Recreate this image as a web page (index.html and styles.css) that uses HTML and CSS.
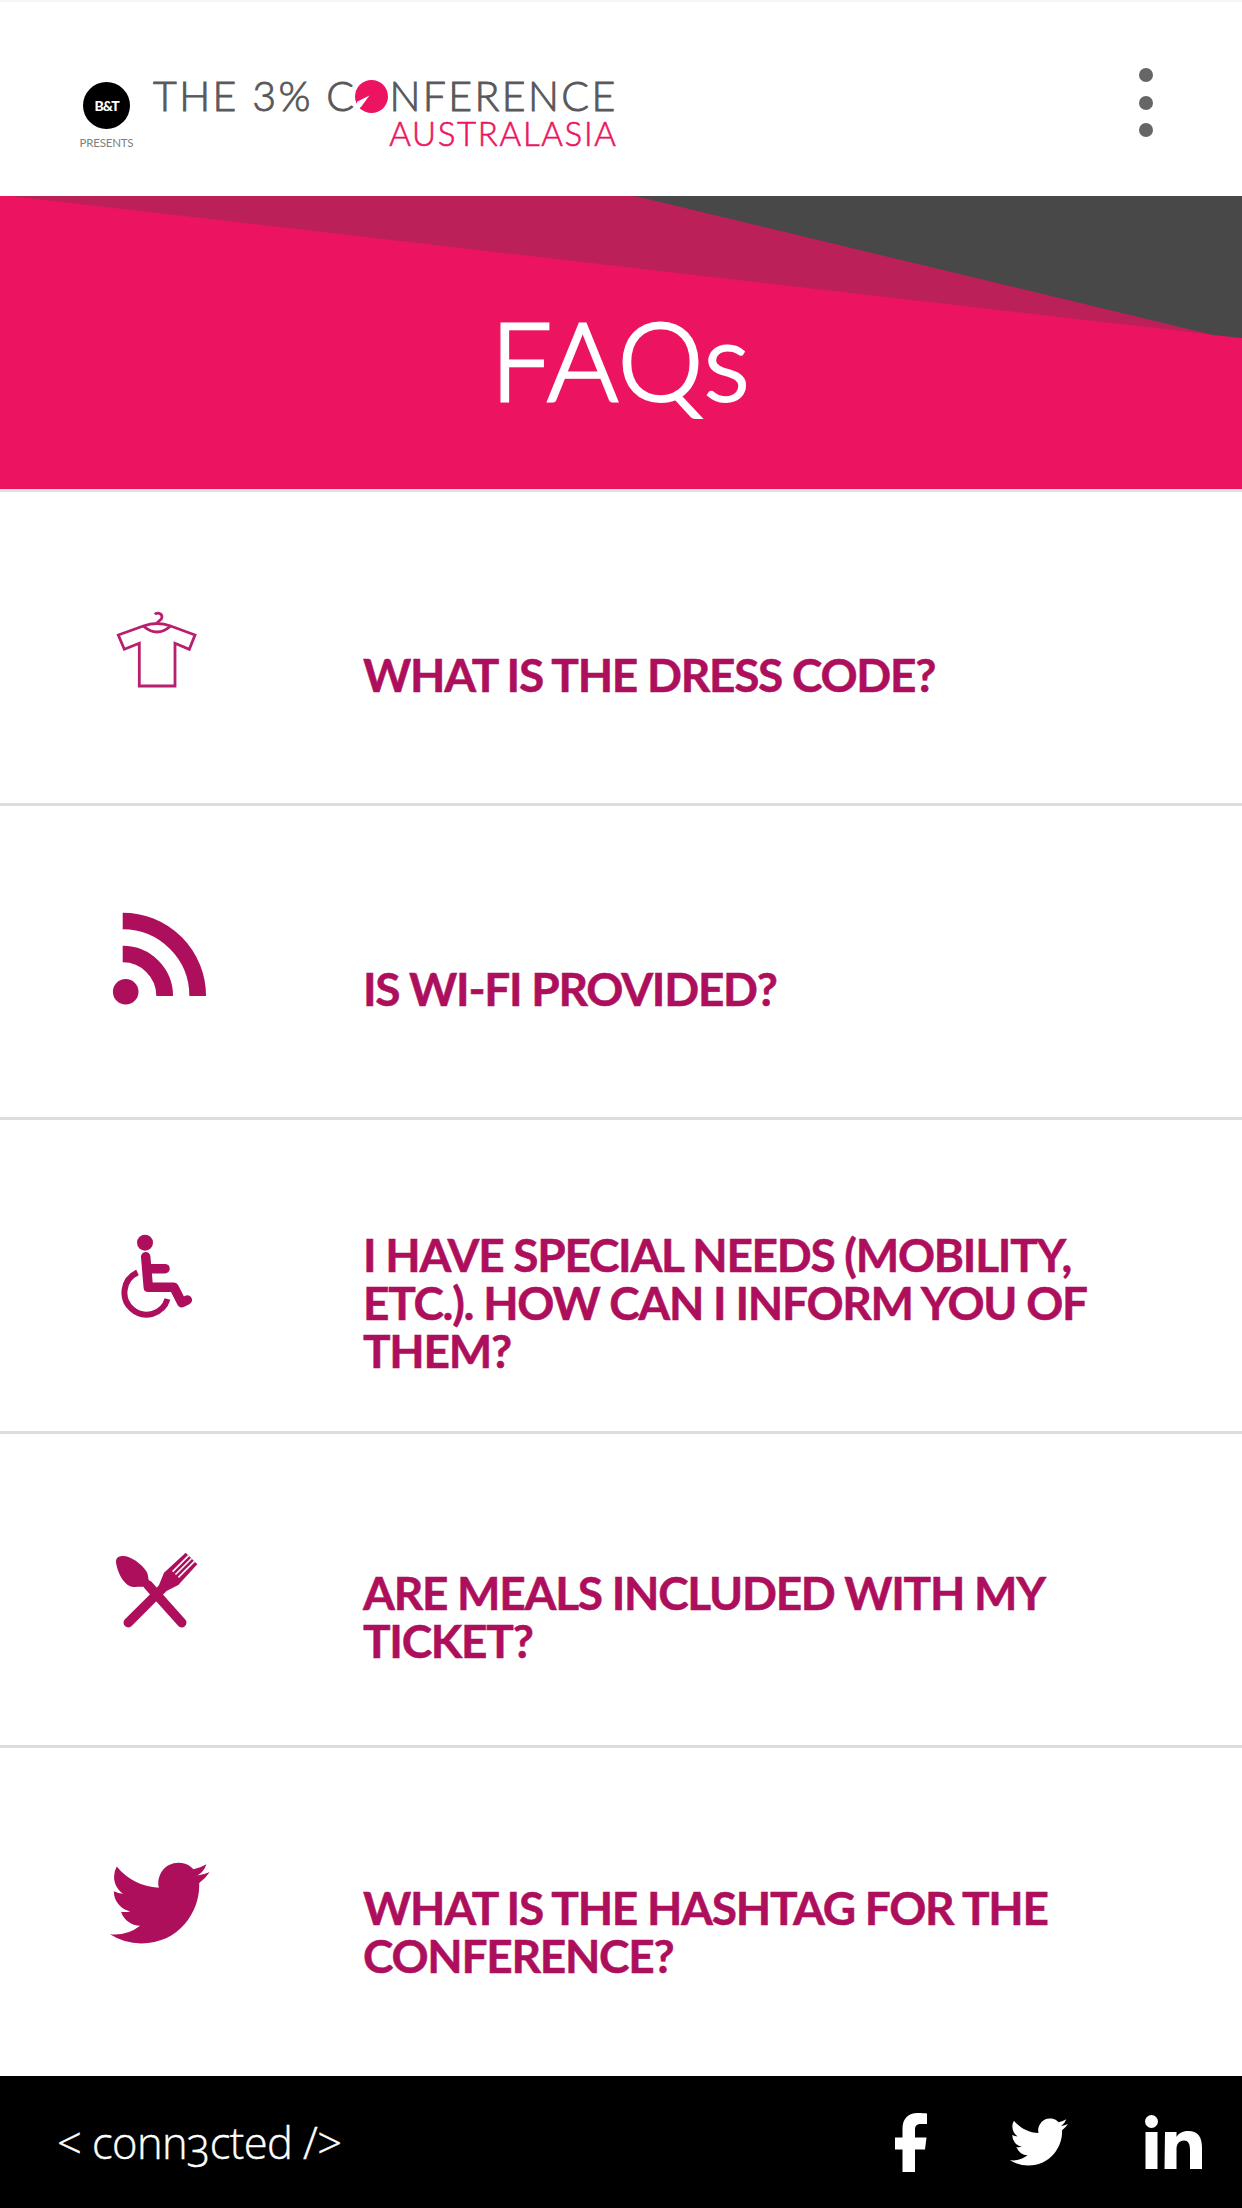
FILE: index.html
```html
<!DOCTYPE html>
<html lang="en">
<head>
    <meta charset="UTF-8">
    <title>FAQs - The 3% Conference Australasia</title>
    <meta name="viewport" content="width=device-width, initial-scale=1.0">
    <link rel="stylesheet" href="styles.css">
</head>
<body>
    <header class="top-bar">
        <div class="presenter">
            <div class="presenter-badge">B&amp;T</div>
            <div class="presenter-label">PRESENTS</div>
        </div>
        <div class="logo">
            <div class="logo-main">
                <span>THE 3% C</span>
                <svg class="logo-dot" viewBox="0 0 32 32">
                    <circle cx="16" cy="16" r="16" fill="#ec1461"/>
                    <path d="M0 31 L2 21 L14 15 L6 26 Z" fill="#fff"/>
                </svg>
                <span>NFERENCE</span>
            </div>
            <div class="logo-sub">AUSTRALASIA</div>
        </div>
        <div class="menu-dots">
            <span></span>
            <span></span>
            <span></span>
        </div>
    </header>

    <section class="banner">
        <svg class="banner-bg" viewBox="0 0 1242 293" preserveAspectRatio="none">
            <polygon points="10,0 640,0 1242,142" fill="#bc2059"/>
            <polygon points="635,0 1242,0 1242,142 1213,139" fill="#484848"/>
        </svg>
        <h1 class="banner-title">FAQs</h1>
    </section>

    <main class="faq-list">
        <div class="faq-row">
            <div class="faq-icon">
                <svg viewBox="0 0 120 120" class="icon-line">
                    <path d="M47.3 38 L22.3 47 L28.3 61.3 L43.3 55.3 V98 H79 V55.3 L93.3 61.3 L99 47 L74.7 38 Q61 50 47.3 38 Q61 33 74.7 38"/>
                    <path d="M61 37 V35.5 C61 33 66 32.5 66 29 C66 25 60.500 24 59 26.500"/>
                </svg>
            </div>
            <h2 class="faq-question">WHAT IS THE DRESS CODE?</h2>
        </div>
        <div class="faq-row">
            <div class="faq-icon">
                <svg viewBox="0 0 120 120">
                    <circle class="icon-fill" cx="29.700" cy="89.700" r="12.800"/>
                    <path class="icon-arc" d="M26.700 19 A75 75 0 0 1 101.700 94"/>
                    <path class="icon-arc" d="M26.700 52 A42 42 0 0 1 68.700 94"/>
                </svg>
            </div>
            <h2 class="faq-question">IS WI-FI PROVIDED?</h2>
        </div>
        <div class="faq-row">
            <div class="faq-icon">
                <svg viewBox="0 0 120 120">
                    <circle class="icon-fill" cx="49" cy="26.700" r="8"/>
                    <path class="icon-body" d="M49.700 40.700 L52.300 71.300 H78 L85.700 86.700 L91.300 84"/>
                    <path class="icon-body" d="M53.300 52.700 H69"/>
                    <path class="icon-wheel" d="M41.500 56.500 A22 22 0 1 0 71.500 83"/>
                </svg>
            </div>
            <h2 class="faq-question">I HAVE SPECIAL NEEDS (MOBILITY, ETC.). HOW CAN I INFORM YOU OF THEM?</h2>
        </div>
        <div class="faq-row">
            <div class="faq-icon">
                <svg viewBox="0 0 120 120">
                    <path class="icon-body" d="M32.300 92.700 L66 59"/>
                    <polygon class="icon-fill" points="62.300,56.700 68,42.700 89.700,22.700 101.300,34.300 82.300,55 69,61.700"/>
                    <path class="icon-slit" d="M76.600 41.600 L92.600 25.600 M79.500 44.500 L95.500 28.500 M82.400 47.400 L98.400 31.400"/>
                    <path class="icon-fill" d="M20 31.700 C20 27 24 26 27.300 26 C34 26 45 33 50.700 41.700 C52.500 45 52 49 53.300 51.700 L57.300 59.300 L49 57.300 C46 56 41 57.500 35.700 56.700 C28 55 21 42 20 31.700 Z"/>
                    <path class="icon-body" d="M52 55 L85.700 92.700"/>
                </svg>
            </div>
            <h2 class="faq-question">ARE MEALS INCLUDED WITH MY TICKET?</h2>
        </div>
        <div class="faq-row">
            <div class="faq-icon">
                <svg viewBox="0 0 120 120">
                    <path class="icon-fill" transform="translate(14 8.400) scale(4.140)" d="M23.953 4.57a10 10 0 01-2.825.775 4.958 4.958 0 002.163-2.723c-.951.555-2.005.959-3.127 1.184a4.92 4.92 0 00-8.384 4.482C7.69 8.095 4.067 6.13 1.64 3.162a4.822 4.822 0 00-.666 2.475c0 1.71.87 3.213 2.188 4.096a4.904 4.904 0 01-2.228-.616v.06a4.923 4.923 0 003.946 4.827 4.996 4.996 0 01-2.212.085 4.936 4.936 0 004.604 3.417 9.867 9.867 0 01-6.102 2.105c-.39 0-.779-.023-1.17-.067a13.995 13.995 0 007.557 2.209c9.053 0 13.998-7.496 13.998-13.985 0-.21 0-.42-.015-.63A9.935 9.935 0 0024 4.59z"/>
                </svg>
            </div>
            <h2 class="faq-question">WHAT IS THE HASHTAG FOR THE CONFERENCE?</h2>
        </div>
    </main>

    <footer class="footer">
        <div class="footer-brand">&lt; conn3cted /&gt;</div>
        <div class="footer-social">
            <svg class="social-f" viewBox="0 0 32 59">
                <path d="M32 .5v10.500h-6c-5 0-6 2.500-6 6v7.500h11.500l-1.500 12h-10v22.500h-12.500v-22.500h-7.500v-12h7.500v-9c0-10 6-15.500 15-15.500 4 0 8 .3 9.500.5z"/>
            </svg>
            <svg class="social-t" viewBox="0 2.250 24 19.500">
                <path d="M23.953 4.57a10 10 0 01-2.825.775 4.958 4.958 0 002.163-2.723c-.951.555-2.005.959-3.127 1.184a4.92 4.92 0 00-8.384 4.482C7.69 8.095 4.067 6.13 1.64 3.162a4.822 4.822 0 00-.666 2.475c0 1.71.87 3.213 2.188 4.096a4.904 4.904 0 01-2.228-.616v.06a4.923 4.923 0 003.946 4.827 4.996 4.996 0 01-2.212.085 4.936 4.936 0 004.604 3.417 9.867 9.867 0 01-6.102 2.105c-.39 0-.779-.023-1.17-.067a13.995 13.995 0 007.557 2.209c9.053 0 13.998-7.496 13.998-13.985 0-.21 0-.42-.015-.63A9.935 9.935 0 0024 4.59z"/>
            </svg>
            <svg class="social-in" viewBox="0 0 57 54">
                <circle cx="6.500" cy="6.500" r="6.500"/>
                <rect x=".5" y="17" width="12" height="37"/>
                <path d="M20 17h11.500v5c2-3.500 6-6 11.500-6 11 0 14 7 14 17v21h-12v-19c0-5-1-9.500-6-9.500-5 0-7.500 3.500-7.500 9v19.500h-12z"/>
            </svg>
        </div>
    </footer>
</body>
</html>
```

FILE: styles.css
```css
html, body {
    margin: 0;
    padding: 0;
    background: #fff;
    font-family: Lato, 'Liberation Sans', sans-serif;
}
.top-bar {
    height: 196px;
    box-sizing: border-box;
    display: flex;
    align-items: center;
    padding: 0 89px 0 80px;
    border-top: 2px solid #f5f5f5;
}
.presenter {
    width: 53px;
    margin-top: 33px;
    display: flex;
    flex-direction: column;
    align-items: center;
}
.presenter-badge {
    width: 47px;
    height: 47px;
    border-radius: 50%;
    background: #000;
    color: #fff;
    font-size: 14px;
    font-weight: 900;
    letter-spacing: -1px;
    line-height: 47px;
    text-align: center;
}
.presenter-label {
    margin-top: 7px;
    color: #808080;
    font-size: 11.5px;
    line-height: 13px;
    letter-spacing: -0.2px;
}
.logo {
    margin-left: 20px;
    margin-top: 27px;
    display: flex;
    flex-direction: column;
    align-items: flex-end;
}
.logo-main {
    display: flex;
    align-items: center;
    color: #58585a;
    font-size: 41px;
    font-weight: 300;
    line-height: 36px;
    letter-spacing: 2.400px;
    -webkit-text-stroke: 0.9px #58585a;
}
.logo-dot {
    width: 33px;
    height: 33px;
    margin: 0 1px 0 -1px;
}
.logo-sub {
    margin-top: 5px;
    color: #ec1461;
    font-size: 33px;
    font-weight: 300;
    line-height: 28px;
    letter-spacing: 1.700px;
    -webkit-text-stroke: 0.6px #ec1461;
}
.menu-dots {
    margin-left: auto;
    margin-top: 7px;
    display: flex;
    flex-direction: column;
    gap: 13.500px;
}
.menu-dots span {
    width: 14px;
    height: 14px;
    border-radius: 50%;
    background: #666;
}
.banner {
    position: relative;
    height: 293px;
    background: #ec1461;
    display: flex;
    justify-content: center;
    border-bottom: 3px solid #dde3e1;
}
.banner-bg {
    position: absolute;
    left: 0;
    top: 0;
    width: 100%;
    height: 100%;
}
.banner-title {
    position: relative;
    margin: 0;
    padding-top: 98px;
    color: #fff;
    font-size: 108px;
    font-weight: 300;
    line-height: 130px;
    letter-spacing: 1.500px;
    -webkit-text-stroke: 3px #fff;
}
.faq-list {
    height: 1584px;
    box-sizing: border-box;
}
.faq-row {
    height: 314px;
    box-sizing: border-box;
    display: flex;
    align-items: center;
    border-bottom: 3px solid #ddd;
}
.faq-row:last-child {
    border-bottom: none;
}
.faq-icon {
    width: 312px;
    flex-shrink: 0;
    display: flex;
    justify-content: center;
}
.faq-icon svg {
    width: 120px;
    height: 120px;
}
.faq-question {
    width: 740px;
    margin: 0 0 0 51px;
    padding-top: 54px;
    color: #ad0f5c;
    font-size: 46px;
    font-weight: 700;
    line-height: 48px;
    letter-spacing: -1.270px;
    -webkit-text-stroke: 0.5px #ad0f5c;
}
.icon-line {
    fill: none;
    stroke: #b81f6c;
    stroke-width: 2.800;
}
.icon-fill {
    fill: #ad0f5c;
}
.icon-arc {
    fill: none;
    stroke: #ad0f5c;
    stroke-width: 16.700;
}
.icon-body {
    fill: none;
    stroke: #ad0f5c;
    stroke-width: 9.500;
    stroke-linecap: round;
    stroke-linejoin: round;
}
.icon-wheel {
    fill: none;
    stroke: #ad0f5c;
    stroke-width: 6px;
}
.icon-slit {
    fill: none;
    stroke: #fff;
    stroke-width: 1.600;
}
.footer {
    height: 132px;
    box-sizing: border-box;
    background: #000;
    display: flex;
    align-items: center;
    justify-content: space-between;
    padding: 0 40px 0 57px;
}
.footer-brand {
    color: #fff;
    font-family: 'Open Sans', sans-serif;
    font-size: 43.500px;
    font-weight: 300;
    font-variant-numeric: oldstyle-nums;
    letter-spacing: -0.6px;
    -webkit-text-stroke: 0.4px #fff;
}
.footer-social {
    display: flex;
    align-items: center;
}
.footer-social svg {
    fill: #fff;
}
.social-f {
    width: 32px;
    height: 59px;
}
.social-t {
    width: 58px;
    height: 50px;
    margin-left: 83px;
}
.social-in {
    width: 57px;
    height: 54px;
    margin-left: 77px;
}
```
